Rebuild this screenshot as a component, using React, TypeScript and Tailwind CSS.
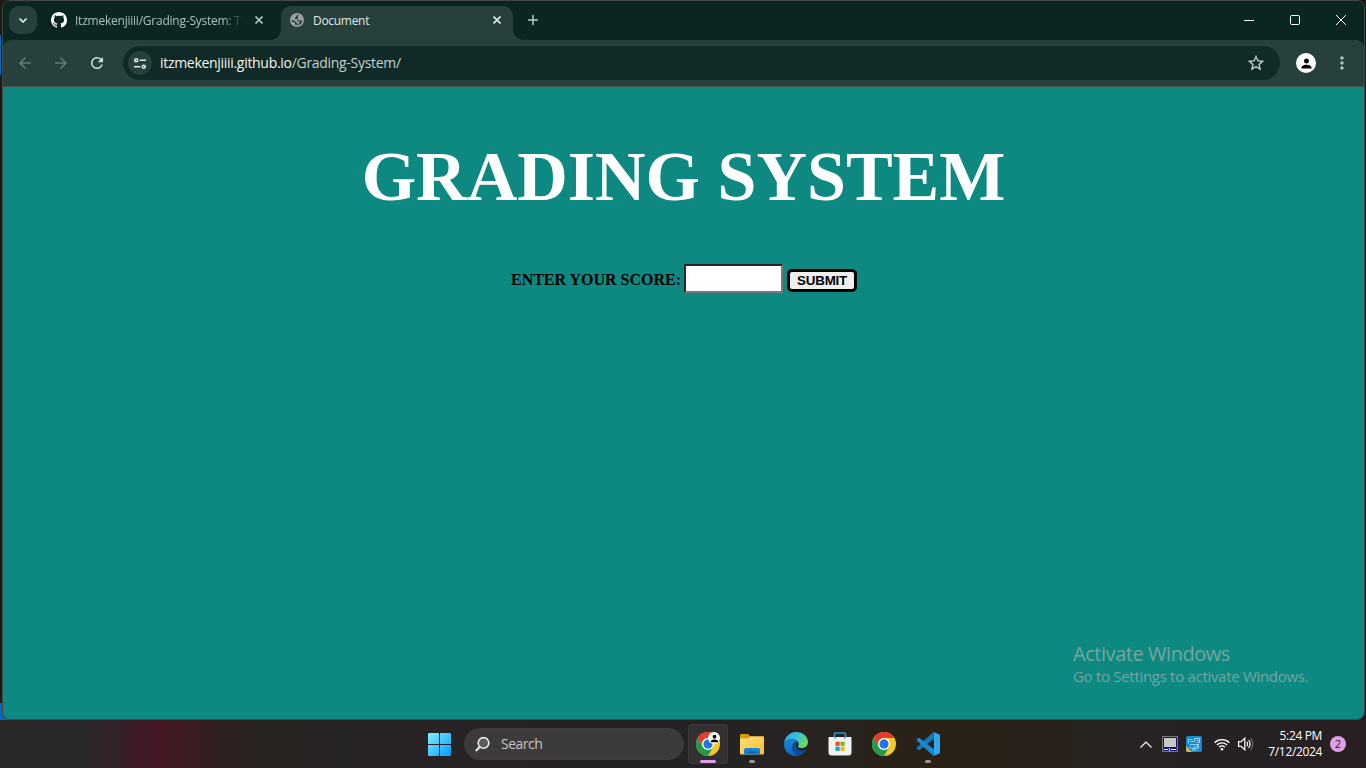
import type { ReactNode } from 'react';
import { MdArrowBack, MdArrowForward, MdMoreVert, MdPerson, MdRefresh, MdStarBorder } from 'react-icons/md';

function GithubMark({ className }: { className: string }) {
  return (
    <svg viewBox="0 0 16 16" className={className} fill="currentColor">
      <path d="M8 0C3.580 0 0 3.580 0 8c0 3.540 2.290 6.530 5.470 7.590.4.070.55-.17.55-.38 0-.19-.01-.82-.01-1.490-2.010.37-2.530-.49-2.690-.94-.09-.23-.48-.94-.82-1.130-.28-.15-.68-.52-.01-.53.63-.01 1.080.58 1.230.82.72 1.210 1.870.87 2.330.66.07-.52.28-.87.51-1.070-1.780-.2-3.640-.89-3.640-3.950 0-.87.31-1.590.82-2.150-.08-.2-.36-1.020.08-2.120 0 0 .67-.21 2.200.82.64-.18 1.320-.27 2-.27s1.360.09 2 .27c1.530-1.040 2.200-.82 2.200-.82.44 1.100.16 1.920.08 2.120.51.56.82 1.270.82 2.150 0 3.070-1.870 3.750-3.650 3.950.29.25.54.73.54 1.480 0 1.070-.01 1.930-.01 2.200 0 .21.15.46.55.38A8.010 8.010 0 0 0 16 8c0-4.420-3.580-8-8-8z" />
    </svg>
  );
}

function CloseGlyph({ className }: { className: string }) {
  return (
    <svg viewBox="0 0 8 8" className={className} fill="none" stroke="currentColor" strokeWidth="1.7">
      <path d="M.5.5l7 7M7.5.5l-7 7" />
    </svg>
  );
}

function Globe() {
  return (
    <svg viewBox="0 0 14 14" className="h-[14px] w-[14px]">
      <circle cx="7" cy="7" r="7" fill="#9ca1a7" />
      <path d="M8.600 1.600C7.600 2.200 6.500 2 6.500 3.200c0 1-1.600.8-1.600 2 0 1.300 1.700 1 3 1.200 1.200.2 1 1.300 2.100 1.400 1 .1 1.400-.8 2.400-.6C12.200 10.200 9.800 12.300 7 12.400c-.3-.8.7-1.300.4-2.200-.3-.8-1.500-.6-1.800-1.500C5.200 7.500 3.500 7.600 1.600 6.700c0 .7 0 1.300.2 1.900 1 .9 2.200.3 3 1.200.6.7-.1 1.300.6 2.300l1.600.3 1-.900c.4-.8 1.400-1 1.500-2 .1-1.200-1.500-1.200-2.300-1.700" fill="#28403b" />
    </svg>
  );
}

function TabStrip() {
  return (
    <div className="flex h-[39px] shrink-0 items-start bg-[#0b2521] pt-[5px] pl-[6px]">
      <div className="flex h-7 w-7 items-center justify-center rounded-[10px] bg-[#28403b] text-[#dfe9e6]">
        <svg viewBox="0 0 8 5" className="h-[5px] w-2" fill="none" stroke="currentColor" strokeWidth="1.6">
          <path d="M.5.5L4 4 7.5.5" />
        </svg>
      </div>
      <div className="ml-[14px] flex h-7 w-[230px] items-center text-[#a9c1ba]">
        <GithubMark className="h-4 w-4 shrink-0 text-white" />
        <div className="mt-px ml-2 w-[168px] text-[12px] tracking-[-0.23px] whitespace-nowrap [mask-image:linear-gradient(to_right,black_88%,transparent)]">
          Itzmekenjiiii/Grading-System: Th
        </div>
        <CloseGlyph className="ml-[12px] h-2 w-2" />
      </div>
      <div className="relative flex h-[34px] w-[232px] items-start rounded-t-[10px] bg-[#28403b] pl-[9px] text-[#dfe9e6]">
        <div className="absolute bottom-0 -left-[10px] h-[10px] w-[10px] bg-[radial-gradient(circle_at_0_0,transparent_9.5px,#28403b_10px)]" />
        <div className="absolute -right-[10px] bottom-0 h-[10px] w-[10px] bg-[radial-gradient(circle_at_100%_0,transparent_9.5px,#28403b_10px)]" />
        <div className="flex h-7 items-center">
          <Globe />
          <div className="mt-px ml-[9px] w-[180px] text-[12px] tracking-[-0.3px]">Document</div>
          <CloseGlyph className="h-2 w-2" />
        </div>
      </div>
      <div className="ml-[15px] flex h-7 items-center text-[#b5cdc6]">
        <svg viewBox="0 0 10 10" className="h-[10px] w-[10px]" fill="none" stroke="currentColor" strokeWidth="1.5">
          <path d="M5 0v10M0 5h10" />
        </svg>
      </div>
      <div className="mr-[18px] ml-auto flex h-7 items-center gap-9 text-white">
        <svg viewBox="0 0 10 10" className="h-[10px] w-[10px]" stroke="currentColor">
          <path d="M0 5.5h10" />
        </svg>
        <svg viewBox="0 0 10 10" className="h-[10px] w-[10px]" fill="none" stroke="currentColor">
          <rect x=".5" y=".5" width="9" height="9" rx="1.2" />
        </svg>
        <svg viewBox="0 0 10 10" className="h-[10px] w-[10px]" fill="none" stroke="currentColor">
          <path d="M0 0l10 10M10 0L0 10" />
        </svg>
      </div>
    </div>
  );
}

function Toolbar() {
  return (
    <div className="bg-[#0b2521]">
      <div className="flex h-[47px] items-center rounded-t-[8px] border-b border-[#45544f] bg-[#28403b] pl-[13px]">
        <MdArrowBack className="h-[18px] w-[18px] text-[#667a75]" />
        <MdArrowForward className="ml-[18px] h-[18px] w-[18px] text-[#667a75]" />
        <MdRefresh className="ml-[18px] h-[18px] w-[18px] text-[#cfdfda]" />
        <div className="ml-[17px] flex h-[34px] w-[1157px] items-center rounded-full bg-[#122a27] pl-[5px]">
          <div className="flex h-6 w-6 items-center justify-center rounded-full bg-[#28403b] text-[#dfe9e6]">
            <svg viewBox="0 0 12 11" className="h-[11px] w-3" fill="none" stroke="currentColor" strokeWidth="1.5">
              <circle cx="2.2" cy="2.3" r="1.5" />
              <path d="M5.6 2.3H12M0 8.7h6.4" />
              <circle cx="9.8" cy="8.7" r="1.5" />
            </svg>
          </div>
          <div className="mb-px ml-2 text-[14px] tracking-[-0.3px] text-[#c3d0cc]">
            <span className="text-[#f1f6f4]">itzmekenjiiii.github.io</span>/Grading-System/
          </div>
          <MdStarBorder className="mr-[14px] ml-auto h-5 w-5 text-[#c7cfcc]" />
        </div>
        <div className="ml-4 flex h-5 w-5 items-center justify-center rounded-full bg-white text-black">
          <MdPerson className="h-[15px] w-[15px]" />
        </div>
        <MdMoreVert className="ml-[16px] h-5 w-5 text-[#a9c7be]" />
      </div>
    </div>
  );
}

function GradingPage() {
  return (
    <div className="relative flex flex-1 flex-col items-center bg-[#0d8982] font-['Liberation_Serif',serif]">
      <h1 className="mt-[50px] text-[70px] leading-[80px] font-bold whitespace-nowrap text-white">GRADING SYSTEM</h1>
      <div className="mt-[47px] flex items-start text-black">
        <label htmlFor="score" className="mt-[7px] pl-px text-[16px] leading-[18px] font-bold whitespace-nowrap">
          ENTER YOUR SCORE:
        </label>
        <input
          id="score"
          className="ml-[3px] h-[29px] w-[99px] border-2 border-t-[#252525] border-r-[#767676] border-b-[#767676] border-l-[#252525] bg-white outline-none"
        />
        <button className="mt-[5px] ml-1 flex h-[23px] w-[70px] items-center justify-center rounded-[5px] border-[3px] border-black bg-[#efefef] font-['Liberation_Sans',sans-serif] text-[13.33px] font-bold tracking-[-0.2px]">
          SUBMIT
        </button>
      </div>
      <div className="absolute top-[553px] left-[1070px] whitespace-nowrap text-[#76a5a1] font-['Open_Sans',sans-serif]">
        <div className="text-[20px] leading-[27px] tracking-[-0.45px]">Activate Windows</div>
        <div className="-mt-px text-[15px] leading-[20px] tracking-[-0.3px]">Go to Settings to activate Windows.</div>
      </div>
    </div>
  );
}

function Chrome({ className }: { className: string }) {
  return (
    <svg viewBox="0 0 48 48" className={className}>
      <circle cx="24" cy="24" r="24" fill="#fbc924" />
      <path d="M3.2 12A24 24 0 0 1 44.8 12H24a12 12 0 0 0-10.4 18z" fill="#e33b2e" />
      <path d="M3.200 12A24 24 0 0 0 24 48l10.400-18L24 24l-10.400 6z" fill="#229a4b" />
      <circle cx="24" cy="24" r="12" fill="#fff" />
      <circle cx="24" cy="24" r="9.3" fill="#2474e8" />
    </svg>
  );
}

function Folder() {
  return (
    <svg viewBox="0 0 24 24" className="h-6 w-6">
      <defs>
        <linearGradient id="folder" x2="1" y2="1"><stop stopColor="#ffe07a" /><stop offset="1" stopColor="#f8bd30" /></linearGradient>
      </defs>
      <path d="M0 3.200Q0 2 1.200 2H8l2.400 2.400V9H0z" fill="#d99a0c" />
      <path d="M0 6.500h8.400l2.200-2.200H23q1 0 1 1V21.500q0 1-1 1H1q-1 0-1-1z" fill="url(#folder)" />
      <path d="M4 22.500v-4.500q0-2 2-2h12q2 0 2 2v4.500z" fill="#1583d6" />
      <path d="M7.500 19.500h9v1.400h-9z" fill="#0b5ca6" />
    </svg>
  );
}

function Edge() {
  return (
    <svg viewBox="0 0 24 24" className="h-6 w-6">
      <defs>
        <linearGradient id="edgeTop" x2="1" y2=".4"><stop stopColor="#2aa7e8" /><stop offset=".55" stopColor="#35c1dc" /><stop offset="1" stopColor="#62dc62" /></linearGradient>
        <linearGradient id="edgeLeft" x2="0" y2="1"><stop stopColor="#1687d8" /><stop offset="1" stopColor="#1169c4" /></linearGradient>
      </defs>
      <path d="M.1 11.3C.8 4.700 6 0 12.300 0 19 0 24 4.600 24 10c0 3.700-2.800 6-6.300 6-2.800 0-4.100-.9-3.700-1.500 1.600-2.200.6-6-3.500-6.900C5.500 6.500.7 9.300.1 11.300z" fill="url(#edgeTop)" />
      <path d="M.1 11.300C1.200 7.700 5.500 6.100 9.200 7.200c2.300.7 3.400 1.800 3.900 2.800-2.600-.5-5.300 2.300-4.800 6C8.900 20.600 12.200 23.800 14.500 23.700 6.300 25.400-.7 19 .1 11.300z" fill="url(#edgeLeft)" />
      <path d="M13.100 10c-2.700.2-5.300 2.300-4.800 6 .7 4.700 4.200 7.700 6.200 7.700 3.200-.6 6-2.800 7.600-5.500.2-.5-.1-.8-.6-.5-5.300 2.700-10.500-1-9.200-5.200.3-1 .8-1.700.8-2.500z" fill="#0b4d97" />
    </svg>
  );
}

function Store() {
  return (
    <svg viewBox="0 0 24 24" className="h-6 w-6">
      <path d="M6.500 6V2.200Q6.500 1 7.700 1h8.600q1.200 0 1.200 1.200V6" fill="none" stroke="#249ad5" strokeWidth="1.7" />
      <path d="M.5 5h23v15.500q0 3-3 3h-17q-3 0-3-3z" fill="#f2f2f2" />
      <path d="M6.500 5h1.700v1.600H6.500zM15.800 5h1.700v1.600h-1.700z" fill="#249ad5" />
      <path d="M7.500 9.700h4.200v4.200H7.500z" fill="#f04e23" />
      <path d="M12.500 9.700h4.200v4.200h-4.200z" fill="#79b51c" />
      <path d="M7.500 14.700h4.200v4.200H7.500z" fill="#169ee5" />
      <path d="M12.500 14.700h4.200v4.200h-4.200z" fill="#fbb609" />
    </svg>
  );
}

function Code() {
  return (
    <svg viewBox="0 0 24 24" className="h-6 w-6">
      <path d="M17.500 0L1 15.300c-.5.500-.5 1 0 1.400l1.300 1.200c.4.300.8.300 1.200 0L18 6.800z" fill="#1479bd" />
      <path d="M17.500 24L1 8.700c-.5-.5-.5-1 0-1.400l1.300-1.200c.4-.3.8-.3 1.200 0L18 17.200z" fill="#168bd3" />
      <path d="M17.500 0L23 2.300q1 .5 1 1.500v16.400q0 1-1 1.500L17.500 24q-.7 0-1.400-.8 1.900.8 1.900-1.300V2.100Q18 0 16.100.8q.7-.8 1.400-.8z" fill="#31a7f2" />
    </svg>
  );
}

function TaskItem({ children, mark, active }: { children: ReactNode; mark?: string; active?: boolean }) {
  return (
    <div className={`relative flex h-10 w-10 items-center justify-center rounded-[4px] ${active ? 'border border-[#3c393a] bg-[#323031]' : ''}`}>
      {children}
      {mark && <div className={`absolute left-1/2 h-[3px] -translate-x-1/2 rounded-full ${mark}`} />}
    </div>
  );
}

function Taskbar() {
  return (
    <div className="flex h-12 shrink-0 items-center bg-[linear-gradient(90deg,#2a2829_0px,#2b282b_80px,#35202a_122px,#3f1a26_140px,#451824_160px,#3d1b22_190px,#302021_215px,#28231f_260px,#272425_340px,#282224_430px,#242224_690px,#28231f_830px,#2b2116_940px,#29221b_1060px,#282224_1140px,#271f21_1366px)] pl-[428px]">
      <svg viewBox="0 0 23 23" className="h-[23px] w-[23px] shrink-0">
        <defs>
          <linearGradient id="start" x2="1" y2="1"><stop stopColor="#7defff" /><stop offset="1" stopColor="#0799ff" /></linearGradient>
        </defs>
        <path d="M1 0h10v11H0V1q0-1 1-1zM12 0h10q1 0 1 1v10H12zM0 12h11v11H1q-1 0-1-1zM12 12h11v10q0 1-1 1H12z" fill="url(#start)" />
      </svg>
      <div className="ml-[13px] flex h-8 w-[220px] shrink-0 items-center rounded-full border border-[#434041] bg-[#3d3a3b] pl-[10px] text-[#c7c5c6]">
        <svg viewBox="0 0 15 15" className="h-[15px] w-[15px]" fill="#5c5a5b" stroke="#ececec" strokeWidth="1.6">
          <circle cx="8.500" cy="6" r="5.300" />
          <path d="M4.800 9.800L.8 14" strokeWidth="2" />
        </svg>
        <div className="mb-px ml-[11px] text-[14px] tracking-[-0.5px]">Search</div>
      </div>
      <div className="ml-1 flex shrink-0 gap-1">
        <TaskItem active mark="bottom-0 w-4 bg-[#dd9ee8]">
          <div className="relative h-6 w-6">
            <Chrome className="h-6 w-6" />
            <div className="absolute top-0 left-[12px] flex h-3 w-3 items-center justify-center rounded-full bg-white text-black">
              <MdPerson className="h-[11px] w-[11px]" />
            </div>
          </div>
        </TaskItem>
        <TaskItem mark="bottom-[1px] w-[6px] bg-[#9a9899]"><Folder /></TaskItem>
        <TaskItem><Edge /></TaskItem>
        <TaskItem><Store /></TaskItem>
        <TaskItem><Chrome className="h-6 w-6" /></TaskItem>
        <TaskItem mark="bottom-[1px] w-[6px] bg-[#9a9899]"><Code /></TaskItem>
      </div>
      <div className="mr-5 ml-auto flex items-center text-white">
        <svg viewBox="0 0 12 7" className="h-[7px] w-3" fill="none" stroke="currentColor" strokeWidth="1.2"><path d="M.5 6.500L6 1l5.500 5.500" /></svg>
        <svg viewBox="0 0 16 16" className="ml-[10px] h-4 w-4">
          <path d="M.5.500h15v15H.5z" fill="#c8c8c8" stroke="#777" />
          <path d="M1.500 1.500h13v10h-13z" fill="#c8c8c8" stroke="#11117a" />
          <path d="M1.500 12.500h5v2h-5zM8.500 12.500h6v2h-6z" fill="#fff" stroke="#11117a" />
        </svg>
        <svg viewBox="0 0 16 16" className="ml-2 h-4 w-4" fill="none">
          <rect width="16" height="16" rx="2" fill="#148bd2" />
          <path d="M0 10l6 6H2q-2 0-2-2z" fill="#d9b64d" />
          <path d="M2.500 7.500v-4h4M4.500 5.500h4v-3h5v4h-3M10.500 4.500h3M4 8.500h8v2.500H7M12.500 8v4l-3 2H6M3 10.500l3 2h4" stroke="#a6dcf6" strokeWidth=".9" />
        </svg>
        <svg viewBox="0 0 16 13" className="ml-3 h-[13px] w-4" fill="none" stroke="currentColor" strokeWidth="1.400">
          <path d="M.6 4.700a10.400 10.400 0 0 1 14.800 0M2.900 7a7.200 7.200 0 0 1 10.200 0M5.200 9.200a4 4 0 0 1 5.600 0" />
          <circle cx="8" cy="11.300" r="1.300" fill="currentColor" stroke="none" />
        </svg>
        <svg viewBox="0 0 16 14" className="ml-2 h-[14px] w-4" fill="none" stroke="currentColor" strokeWidth="1.200">
          <path d="M.6 4.700h2.500L6.800 1.200v11.600L3.100 9.300H.6zM8.800 4.800q1.600 2.200 0 4.400M10.600 3q3 4 0 8" />
          <path d="M12.600 1.200q4.300 5.800 0 11.600" stroke="#6b696a" />
        </svg>
        <div className="ml-[14px] w-[55px] pr-px text-right text-[12px] leading-4 tracking-[-0.35px] whitespace-nowrap">
          <div>5:24 PM</div>
          <div>7/12/2024</div>
        </div>
        <div className="ml-[7px] flex h-4 w-4 items-center justify-center rounded-full bg-[#dda0e8] text-[11px] leading-4 text-[#2b2030]">2</div>
      </div>
    </div>
  );
}

export default function App() {
  return (
    <div className="relative flex h-[768px] w-[1366px] flex-col overflow-hidden bg-[#1c1a1b] font-['Open_Sans',sans-serif]">
      <div className="absolute top-[35px] left-0 h-10 w-px bg-[#0b66bd]" />
      <div className="absolute top-[703px] left-0 h-[17px] w-7 bg-[#0b66bd]" />
      <div className="relative mr-px ml-[2px] flex h-[720px] flex-col overflow-hidden rounded-[8px] border border-[#434847]">
        <TabStrip />
        <Toolbar />
        <GradingPage />
      </div>
      <Taskbar />
    </div>
  );
}
